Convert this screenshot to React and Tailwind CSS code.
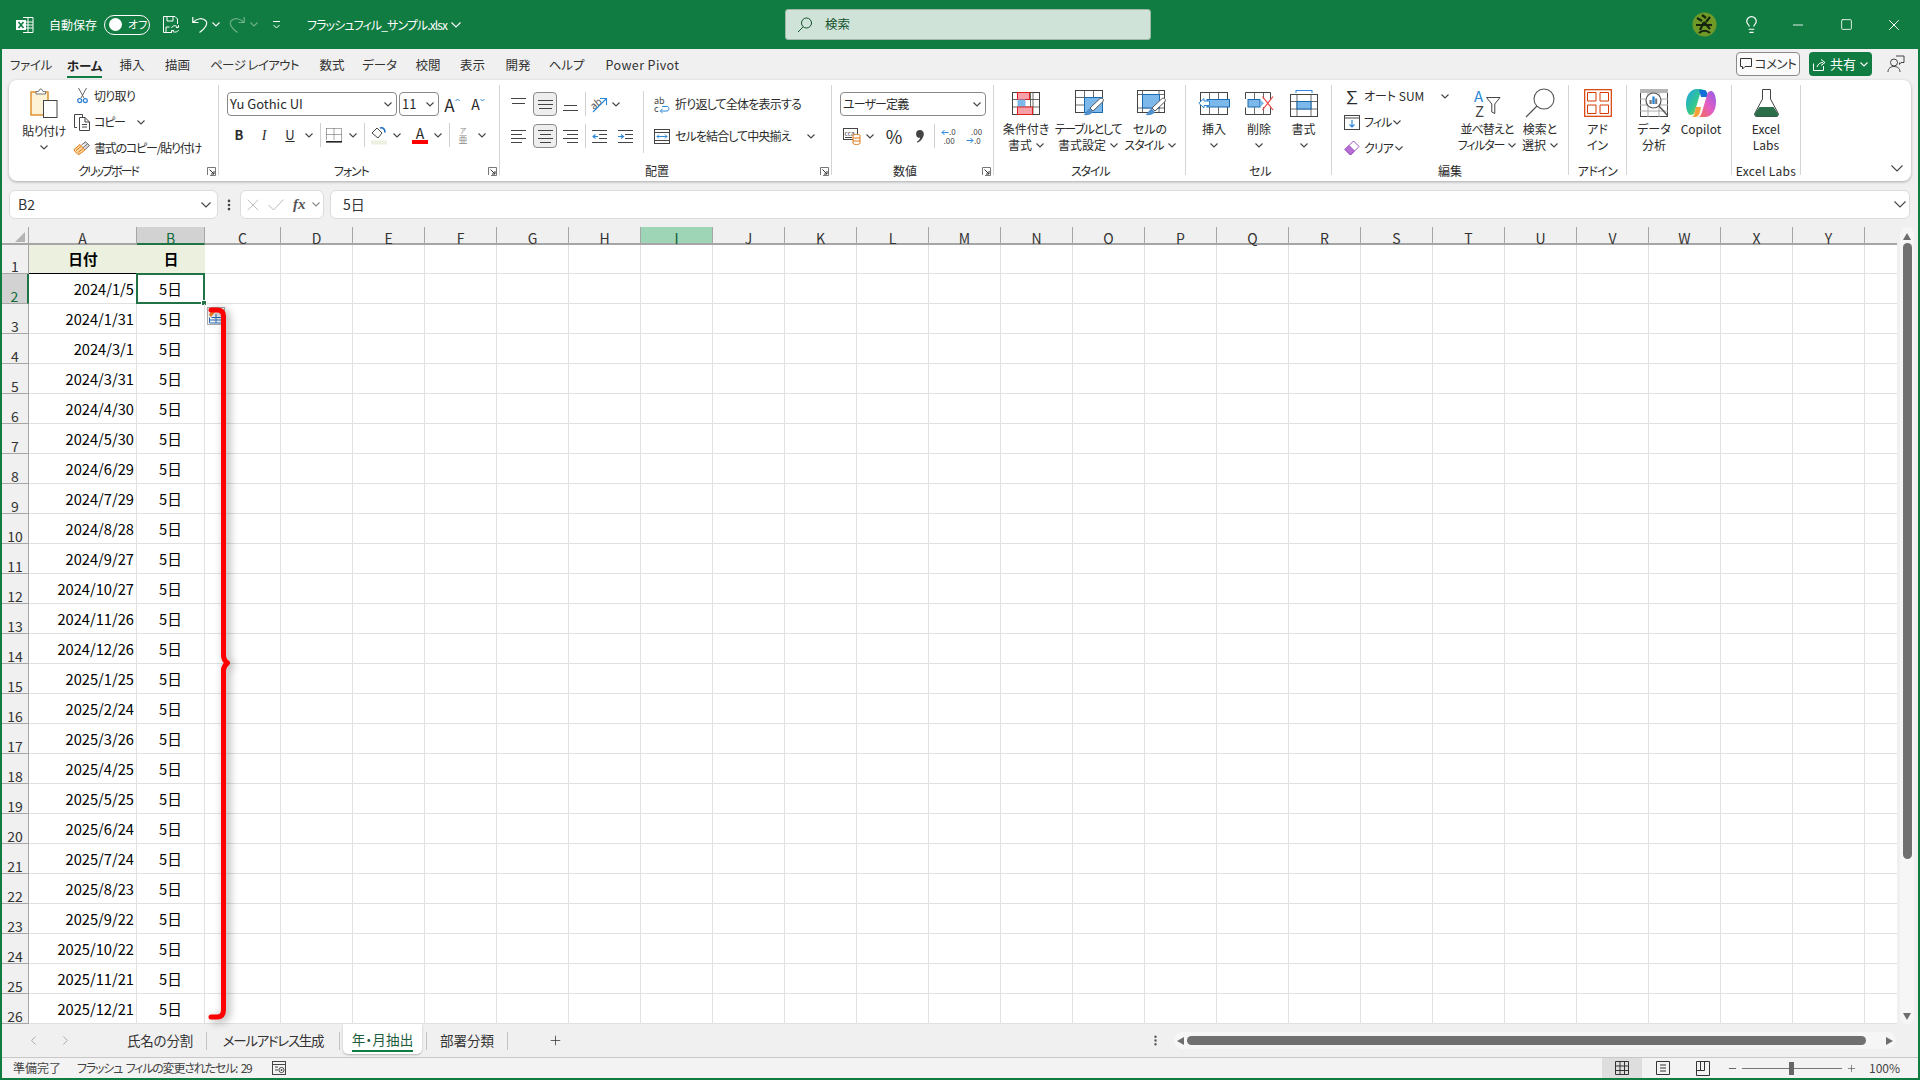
import { Minus, Square, X, Lightbulb, MoreVertical, Plus, ChevronLeft, ChevronRight } from 'lucide-react';

const dates = [
  '2024/1/5', '2024/1/31', '2024/3/1', '2024/3/31', '2024/4/30', '2024/5/30', '2024/6/29', '2024/7/29',
  '2024/8/28', '2024/9/27', '2024/10/27', '2024/11/26', '2024/12/26', '2025/1/25', '2025/2/24', '2025/3/26',
  '2025/4/25', '2025/5/25', '2025/6/24', '2025/7/24', '2025/8/23', '2025/9/22', '2025/10/22', '2025/11/21', '2025/12/21',
];

const plainCols = 'DEFGHIJKLMNOPQRSTUVWXY'.split('');

const menuTabs = [
  { label: 'ファイル', w: 'w-[58px]', cls: 'tracking-[-0.3px]' },
  { label: 'ホーム', w: 'w-[49px]', active: true },
  { label: '挿入', w: 'w-[46px]' },
  { label: '描画', w: 'w-[45px]' },
  { label: 'ページ レイアウト', w: 'w-[109px]', cls: 'tracking-[-0.6px]' },
  { label: '数式', w: 'w-[46px]' },
  { label: 'データ', w: 'w-[49px]' },
  { label: '校閲', w: 'w-[48px]' },
  { label: '表示', w: 'w-[41px]' },
  { label: '開発', w: 'w-[50px]' },
  { label: 'ヘルプ', w: 'w-[47px]' },
  { label: 'Power Pivot', w: 'w-[105px]', cls: 'tracking-[0.4px]' },
];

function Chev({ className = '', color = '#444' }) {
  return (
    <svg width="8" height="5" viewBox="0 0 8 5" className={className}>
      <path d="M0.5 0.5 4 4 7.5 0.5" fill="none" stroke={color} strokeWidth="1.1" />
    </svg>
  );
}

function Expander() {
  return (
    <svg width="9" height="9" viewBox="0 0 9 9">
      <path d="M0.5 8V0.5H8.5V8.5H3" fill="none" stroke="#777" />
      <path d="M2.5 2.5 7 7M7 4V7H4" fill="none" stroke="#333" />
    </svg>
  );
}

function Spot({ w, children, className = '' }) {
  return <span className={`flex shrink-0 items-center justify-center ${w} ${className}`}>{children}</span>;
}

function VSep({ className = '' }) {
  return <span className={`h-[24px] w-px shrink-0 bg-[#d0d0d0] ${className}`} />;
}

function Lines({ rows, align = 'left', width = 15 }) {
  return (
    <svg width={width} height="15" viewBox={`0 0 ${width} 15`}>
      {rows.map(([y, len]) => {
        const x = align === 'left' ? 0 : align === 'right' ? width - len : (width - len) / 2;
        return <rect key={y} x={x} y={y} width={len} height="1" fill="#444" />;
      })}
    </svg>
  );
}

function IndentIcon({ inc }) {
  return (
    <svg width="15" height="13" viewBox="0 0 15 13">
      <path d="M0 .5H15M7 4.5H15M7 8.5H15M0 12.5H15" stroke="#444" fill="none" />
      <path d={inc ? 'M0 6.5H5M3 4.5 5.5 6.5 3 8.5' : 'M1 6.5H6M3.5 4.5 1 6.5 3.5 8.5'} stroke="#2b88d8" strokeWidth="1.1" fill="none" />
    </svg>
  );
}

function PasteIcon() {
  return (
    <svg width="28" height="30" viewBox="0 0 28 30">
      <rect x="1" y="4" width="17" height="23" fill="#fdf1d6" stroke="#dd8a22" strokeWidth="1.4" />
      <path d="M6 6V3.5H8.5L10 1 11.5 1 13 3.5H15.5V6Z" fill="#fff" stroke="#777" />
      <rect x="13.5" y="12.5" width="13.5" height="17" fill="#fff" stroke="#444" />
    </svg>
  );
}

function ScissorsIcon() {
  return (
    <svg width="11" height="16" viewBox="0 0 11 16">
      <path d="M1.5 0 7 10M9.5 0 4 10" stroke="#666" fill="none" />
      <circle cx="2.7" cy="12.6" r="2" fill="none" stroke="#2b7cd3" strokeWidth="1.2" />
      <circle cx="8.3" cy="12.6" r="2" fill="none" stroke="#2b7cd3" strokeWidth="1.2" />
    </svg>
  );
}

function CopyIcon() {
  return (
    <svg width="16" height="17" viewBox="0 0 16 17">
      <path d="M3 13.5H.5V.5H8.5V3" fill="none" stroke="#444" />
      <path d="M5.5 3.5H11L15.5 8V16.5H5.5Z M11 3.5V8H15.5" fill="#fff" stroke="#444" />
      <path d="M8 10.5H13M8 13H13" stroke="#444" />
    </svg>
  );
}

function PainterIcon() {
  return (
    <svg width="18" height="14" viewBox="0 0 18 14">
      <path d="M1 8.5 7 3.5 12 9 6 13.5C4 13 2 11 1 8.5Z" fill="#fbd7a3" stroke="#e17a17" />
      <path d="M3 9.5 8 5.5M5 11.5 10 7.5" stroke="#e17a17" />
      <path d="M8.5 4 12.5 .8 14.5 2.8M12 8.5 16.5 4.5 14.5 2.8 10 6.5" fill="#ddd" stroke="#666" />
    </svg>
  );
}

function BorderIcon() {
  return (
    <svg width="16" height="15" viewBox="0 0 16 15">
      <path d="M.5 .5H15.5V12.5M.5 .5V12.5M8 .5V12.5M.5 6.5H15.5" fill="none" stroke="#555" strokeDasharray="1 1" />
      <rect x="0" y="13" width="16" height="1.6" fill="#222" />
    </svg>
  );
}

function FillIcon() {
  return (
    <svg width="16" height="19" viewBox="0 0 16 19">
      <path d="M1 7 6 2 11 7 7 12Z" fill="#fff" stroke="#444" />
      <path d="M9 2C12 1 14 3 14 6.5" fill="none" stroke="#1b6ec2" strokeWidth="1.6" />
      <rect x="0" y="14.5" width="16" height="4" fill="#ebf1de" />
    </svg>
  );
}

function OrientIcon() {
  return (
    <svg width="18" height="18" viewBox="0 0 18 18" className="overflow-visible">
      <text x="0" y="13" fontSize="10" fill="#555" transform="rotate(-40 5 9)">ab</text>
      <path d="M3 17 16 4M10 3.5H16.5V10" fill="none" stroke="#2b88d8" strokeWidth="1.1" />
    </svg>
  );
}

function WrapIcon() {
  return (
    <svg width="16" height="17" viewBox="0 0 16 17" className="overflow-visible">
      <text x="0" y="8" fontSize="9" fill="#444">ab</text>
      <text x="0" y="16" fontSize="9" fill="#444">c</text>
      <path d="M8 10.5H13C15.5 10.5 15.5 15 13 15H6.5M8.5 12.8 6.3 15 8.5 17" fill="none" stroke="#2b88d8" />
    </svg>
  );
}

function MergeIcon() {
  return (
    <svg width="16" height="15" viewBox="0 0 16 15">
      <rect x=".5" y=".5" width="15" height="14" fill="#fff" stroke="#444" />
      <path d="M.5 3.5H15.5M.5 11.5H15.5" stroke="#444" />
      <path d="M3 7.5H13M5 5.5 3 7.5 5 9.5M11 5.5 13 7.5 11 9.5" fill="none" stroke="#2b88d8" />
    </svg>
  );
}

function AccountingIcon() {
  return (
    <svg width="18" height="17" viewBox="0 0 18 17" className="overflow-visible">
      <rect x=".5" y=".5" width="14" height="11" fill="#fff" stroke="#444" />
      <text x="1.5" y="7.5" fontSize="6.5" fill="#444">cca</text>
      <path d="M2 9.5H9" stroke="#444" />
      <path d="M10 7.5C10 6 17 6 17 7.5V15C17 17 10 17 10 15Z" fill="#fff" stroke="#e07a17" />
      <path d="M10 10H17M10 13H17" stroke="#e07a17" />
    </svg>
  );
}

function CommaIcon() {
  return (
    <svg width="8" height="13" viewBox="0 0 8 13">
      <path d="M4 0A3.8 3.8 0 0 1 7.8 4C7.8 7.5 5 11 1.5 12.8L.9 11.8C3 10.6 4 9.2 4 7.8A3.9 3.9 0 0 1 4 0Z" fill="#444" />
    </svg>
  );
}

function DecimalIcon({ inc }) {
  return (
    <svg width="16" height="17" viewBox="0 0 16 17" className="overflow-visible">
      <text x={inc ? 8 : 5} y="7" fontSize="8" fill="#444">{inc ? '.0' : '.00'}</text>
      <text x={inc ? 2.5 : 8} y="15.5" fontSize="8" fill="#444">{inc ? '.00' : '.0'}</text>
      {inc
        ? <path d="M7.5 4.5H1M3.5 2 1 4.5 3.5 7" fill="none" stroke="#2b88d8" />
        : <path d="M.5 12.5H7M4.5 10 7 12.5 4.5 15" fill="none" stroke="#2b88d8" />}
    </svg>
  );
}

function TableGrid({ children, w = 28, h = 23, className = '' }) {
  return (
    <svg width={w} height={h} viewBox={`0 0 ${w} ${h}`} className={className}>
      {children}
    </svg>
  );
}

function CondIcon() {
  return (
    <TableGrid>
      <rect x=".5" y=".5" width="27" height="22" fill="#fff" stroke="#444" />
      <path d="M9.5 0V23M18.5 0V23M21 0V23M0 7.5H28M0 15H28" stroke="#444" strokeWidth=".8" />
      <rect x="5.5" y=".5" width="12" height="7" fill="#f8a0a8" stroke="#e02020" />
      <rect x="5.5" y="7.5" width="8" height="7.5" fill="#7db8ea" />
      <rect x="5.5" y="15" width="15" height="7.5" fill="#f8a0a8" stroke="#e02020" />
    </TableGrid>
  );
}

function BrushOver() {
  return (
    <g>
      <path d="M27.5 8.5C29 9.5 28.5 11 27.5 12L18 21 15 18 24.5 9C25.5 8 26.5 8 27.5 8.5Z" fill="#fff" stroke="#555" />
      <path d="M17.8 22C16 25 12 25.5 8.5 25 11 23.5 11.5 20 14.7 18.5Z" fill="#4f90cc" />
    </g>
  );
}

function TableFmtIcon() {
  return (
    <TableGrid w={30} h={26} className="ml-[3px]">
      <rect x=".5" y=".5" width="27" height="22" fill="#fff" stroke="#444" />
      <path d="M9.5 0V23M18.5 0V23M0 7.5H28M0 15H28" stroke="#444" strokeWidth=".8" />
      <path d="M9.5 7.5H27.5V22.5H9.5Z" fill="#7db8ea" stroke="#1a6bb0" />
      <BrushOver />
    </TableGrid>
  );
}

function CellStyleIcon() {
  return (
    <TableGrid w={30} h={26} className="ml-[3px]">
      <rect x=".5" y=".5" width="27" height="22" fill="#fff" stroke="#444" />
      <path d="M5.5 0V23M22 0V23M0 4.5H28M0 18H28" stroke="#444" strokeWidth=".8" />
      <rect x="5.5" y="4.5" width="17" height="13.5" fill="#7db8ea" stroke="#1a6bb0" />
      <BrushOver />
    </TableGrid>
  );
}

function InsertIcon() {
  return (
    <svg width="32" height="23" viewBox="0 0 32 23">
      <rect x="2.5" y=".5" width="27" height="22" fill="#fff" stroke="#444" />
      <path d="M11.5 0V23M20.5 0V23" stroke="#444" strokeWidth=".8" />
      <rect x="9" y="7.5" width="22.5" height="7.5" fill="#7db8ea" stroke="#1a6bb0" />
      <path d="M.8 11.2 6 6.5V9H11.5V13.5H6V16Z" fill="#fff" stroke="#2b88d8" />
    </svg>
  );
}

function DeleteIcon() {
  return (
    <svg width="32" height="23" viewBox="0 0 32 23">
      <path d="M2.5 7V.5H27.5V7M2.5 15.5V22.5H27.5V15.5" fill="#fff" stroke="#444" />
      <path d="M11.5 0V7M20.5 0V7M11.5 15V23M20.5 15V23" stroke="#444" strokeWidth=".8" />
      <rect x="5" y="7.5" width="12" height="7.5" fill="#7db8ea" stroke="#1a6bb0" />
      <path d="M17 7.5 21 11.2 17 15Z" fill="#7db8ea" />
      <path d="M19.5 4.5 30 18M30 4.5 19.5 18" stroke="#ee4444" strokeWidth="1.2" />
    </svg>
  );
}

function FormatIcon() {
  return (
    <svg width="28" height="27" viewBox="0 0 28 27">
      <path d="M6 .5H22M6 0V3M22 0V3" stroke="#2b88d8" fill="none" />
      <rect x=".5" y="4.5" width="27" height="22" fill="#fff" stroke="#444" />
      <path d="M7 4V27M21 4V27M0 11.5H28M0 19H28" stroke="#444" strokeWidth=".8" />
      <rect x="7" y="11.5" width="14" height="7.5" fill="#7db8ea" stroke="#1a6bb0" />
    </svg>
  );
}

function AutofillIcon() {
  return (
    <svg width="16" height="15" viewBox="0 0 16 15">
      <rect x=".5" y=".5" width="15" height="14" fill="#fff" stroke="#444" />
      <path d="M.5 3H15.5" stroke="#444" />
      <path d="M8 5V12M5.5 9.5 8 12 10.5 9.5" fill="none" stroke="#2b88d8" strokeWidth="1.2" />
    </svg>
  );
}

function EraserIcon() {
  return (
    <svg width="16" height="16" viewBox="0 0 16 16">
      <path d="M1 9.5 9.5 1 15 6.5 6.5 15Z" fill="#fff" stroke="#9b4fc0" />
      <path d="M1 9.5 5 5.5 10.5 11 6.5 15Z" fill="#b76fd6" stroke="#9b4fc0" />
    </svg>
  );
}

function SortIcon() {
  return (
    <svg width="27" height="27" viewBox="0 0 27 27" className="overflow-visible">
      <text x="0" y="12" fontSize="15" fill="#2b88d8">A</text>
      <text x="1" y="27" fontSize="15" fill="#444">Z</text>
      <path d="M12.5 7.5H26L20.8 14V23.5L17.8 22V14Z" fill="#fff" stroke="#444" />
    </svg>
  );
}

function FindIcon() {
  return (
    <svg width="30" height="30" viewBox="0 0 30 30">
      <circle cx="19" cy="11" r="10" fill="#fff" stroke="#555" strokeWidth="1.1" />
      <path d="M12 18 1 29" stroke="#555" strokeWidth="1.2" />
    </svg>
  );
}

function AddinIcon() {
  return (
    <svg width="28" height="28" viewBox="0 0 28 28">
      <rect x=".7" y=".7" width="26.6" height="26.6" fill="none" stroke="#d83b01" strokeWidth="1.2" />
      <path d="M3.5 3.5H12V12H3.5ZM16 3.5H24.5V12H16ZM3.5 16H12V24.5H3.5ZM16 16H24.5V24.5H16Z" fill="none" stroke="#d83b01" />
    </svg>
  );
}

function AnalysisIcon() {
  return (
    <svg width="28" height="28" viewBox="0 0 28 28">
      <rect x=".5" y=".5" width="27" height="27" fill="#fff" stroke="#444" />
      <rect x="0" y="0" width="28" height="4" fill="#b5b5b5" />
      <path d="M8 4V28M19 4V28M0 10H28M0 16H28M0 22H28" stroke="#aaa" />
      <circle cx="13.5" cy="11.5" r="7.5" fill="#fff" stroke="#555" strokeWidth="1.2" />
      <path d="M19 17 28 27" stroke="#555" strokeWidth="1.5" />
      <rect x="9.5" y="11" width="2.2" height="4" fill="#777" />
      <rect x="12.3" y="7.5" width="2.4" height="7.5" fill="#2b88d8" />
      <rect x="15.2" y="9.5" width="2" height="5.5" fill="#777" />
    </svg>
  );
}

function CopilotIcon() {
  return (
    <svg width="30" height="28" viewBox="0 0 30 28">
      <defs>
        <linearGradient id="cp1" x1="0" y1="0" x2="1" y2="1">
          <stop offset="0" stopColor="#1fa2e8" />
          <stop offset=".55" stopColor="#35c98a" />
          <stop offset="1" stopColor="#f2c531" />
        </linearGradient>
        <linearGradient id="cp2" x1="0" y1="1" x2="1" y2="0">
          <stop offset="0" stopColor="#f5714f" />
          <stop offset=".5" stopColor="#e35cc4" />
          <stop offset="1" stopColor="#8e5de8" />
        </linearGradient>
      </defs>
      <path d="M11 0H18C16 0 15 2 14 5L9 22C8.5 25 7 26 5 26 2 26 0 21 0 15 0 7 4 0 11 0Z" fill="url(#cp1)" />
      <path d="M13 1H18.5C20 1 21 3 21.5 5.5L22.5 8H15Z" fill="#1470d8" />
      <path d="M19 28H12C14 28 15 26 16 23L21 6C21.5 3 23 2 25 2 28 2 30 7 30 13 30 21 26 28 19 28Z" fill="url(#cp2)" />
      <path d="M10 18H15L14 23C13.5 25.5 12 28 9 28H5C8 28 8.5 25 9 22Z" fill="#f8a13a" />
    </svg>
  );
}

function FlaskIcon() {
  return (
    <svg width="25" height="28" viewBox="0 0 25 28">
      <path d="M8.5 .5H16.5V10L24 24C25 26 24 27.5 22 27.5H3C1 27.5 0 26 1 24L8.5 10Z" fill="#fff" stroke="#444" />
      <path d="M5.5 18H19.5L24 24.5C25 26 24 27.5 22 27.5H3C1 27.5 0 26 1 24Z" fill="#2c6e49" />
    </svg>
  );
}

function SmallRow({ icon, label, chev, chevClass = 'ml-[2px]', labelClass = '' }) {
  return (
    <div className="flex h-[22px] items-center">
      <span className="flex w-[20px] shrink-0 items-center justify-center">{icon}</span>
      <span className={`ml-[2px] whitespace-nowrap ${labelClass}`}>{label}</span>
      {chev && <Chev className={chevClass} />}
    </div>
  );
}

function BigBtn({ w, icon, lines, chev }) {
  return (
    <div className={`flex ${w} shrink-0 flex-col items-center`}>
      <div className="flex h-[36px] items-center justify-center">{icon}</div>
      {lines.map((line, i) => (
        <div key={i} className="flex h-[16px] items-center whitespace-nowrap leading-[16px]">
          {line}
          {chev && i === lines.length - 1 && <Chev className="ml-[4px]" />}
        </div>
      ))}
    </div>
  );
}

function CellBtn({ w, icon, label }) {
  return (
    <div className={`flex ${w} shrink-0 flex-col items-center`}>
      <div className="flex h-[36px] items-center justify-center">{icon}</div>
      <div className="flex h-[16px] items-center leading-[16px]">{label}</div>
      <div className="flex h-[16px] items-center"><Chev /></div>
    </div>
  );
}

function Group({ w, label, labelClass = '', expander, children }) {
  return (
    <div className={`flex h-[90px] ${w} shrink-0 flex-col border-r border-[#d4d4d4]`}>
      <div className="flex h-[79px] shrink-0">{children}</div>
      <div className={`flex h-[14px] shrink-0 items-center leading-[14px] ${labelClass}`}>
        <span className="whitespace-nowrap">{label}</span>
        {expander && <span className="ml-auto mr-[2px] flex"><Expander /></span>}
      </div>
    </div>
  );
}

function SelectBox({ w, text, textClass = 'text-[13px]' }) {
  return (
    <div className={`flex h-[24px] ${w} shrink-0 items-center rounded-[4px] border border-[#8a8a8a] bg-white pl-[2px] pr-[4px]`}>
      <span className={`whitespace-nowrap ${textClass}`}>{text}</span>
      <Chev className="ml-auto" />
    </div>
  );
}

function Ribbon() {
  return (
    <div className="ml-[7px] flex h-[101px] w-[1902px] shrink-0 rounded-[8px] bg-white pt-[5px] text-[12px] text-[#2b2b2b] shadow-[0_1px_3px_rgba(0,0,0,0.3)]">
      <Group w="w-[210px]" label="クリップボード" labelClass="pl-[69px] tracking-[-2px]" expander>
        <div className="flex w-[63px] shrink-0 flex-col items-center pl-[7px]">
          <div className="flex h-[33px] items-end"><PasteIcon /></div>
          <div className="mt-[5px] h-[16px] whitespace-nowrap leading-[16px] tracking-[-0.5px]">貼り付け</div>
          <div className="flex h-[16px] items-center"><Chev /></div>
        </div>
        <div className="flex flex-col gap-[4px]">
          <SmallRow icon={<ScissorsIcon />} label="切り取り" labelClass="tracking-[-0.7px]" />
          <SmallRow icon={<CopyIcon />} label="コピー" labelClass="tracking-[-1.2px]" chev chevClass="ml-[12px]" />
          <SmallRow icon={<PainterIcon />} label="書式のコピー/貼り付け" labelClass="tracking-[-1.2px]" />
        </div>
      </Group>

      <Group w="w-[281px]" label="フォント" labelClass="pl-[115px] tracking-[-1.2px]" expander>
        <div className="flex flex-col gap-[7px] pl-[8px] pt-[7px]">
          <div className="flex h-[24px] items-center">
            <SelectBox w="w-[170px]" text="Yu Gothic UI" />
            <SelectBox w="w-[40px] ml-[2px]" text="11" />
            <Spot w="w-[24px] ml-[1px]">
              <span className="text-[17px] leading-none">A</span>
              <svg width="5" height="4" viewBox="0 0 5 4" className="-mt-[9px]"><path d="M.5 3 2.5 1 4.5 3" fill="none" stroke="#2b88d8" /></svg>
            </Spot>
            <Spot w="w-[28px]">
              <span className="text-[14px] leading-none">A</span>
              <svg width="5" height="4" viewBox="0 0 5 4" className="-mt-[9px]"><path d="M.5 1 2.5 3 4.5 1" fill="none" stroke="#2b88d8" /></svg>
            </Spot>
          </div>
          <div className="flex h-[24px] items-center">
            <Spot w="w-[24px]"><span className="text-[13px] font-bold">B</span></Spot>
            <Spot w="w-[26px]"><span className="font-['Liberation_Serif',serif] text-[14px] italic">I</span></Spot>
            <Spot w="w-[26px]"><span className="text-[13px] underline">U</span></Spot>
            <Spot w="w-[12px]"><Chev /></Spot>
            <VSep className="ml-[5px]" />
            <Spot w="w-[26px]"><BorderIcon /></Spot>
            <Spot w="w-[12px]"><Chev /></Spot>
            <VSep className="ml-[5px]" />
            <Spot w="w-[28px]"><FillIcon /></Spot>
            <Spot w="w-[8px]"><Chev /></Spot>
            <Spot w="w-[26px] ml-[6px]">
              <span className="flex flex-col items-center">
                <span className="text-[14px] leading-[14px]">A</span>
                <span className="h-[4px] w-[16px] bg-[#ff0000]" />
              </span>
            </Spot>
            <Spot w="w-[10px]"><Chev /></Spot>
            <VSep className="ml-[6px]" />
            <Spot w="w-[26px]">
              <span className="flex flex-col items-center gap-[1px] text-[#888]">
                <span className="text-[7px] leading-[8px]">ア</span>
                <span className="text-[9px] leading-[10px]">亜</span>
              </span>
            </Spot>
            <Spot w="w-[12px]"><Chev /></Spot>
          </div>
        </div>
      </Group>

      <Group w="w-[332px]" label="配置" labelClass="pl-[145px]" expander>
        <div className="mt-[6px] flex h-[62px] w-[144px] shrink-0 flex-col gap-[8px] border-r border-[#d4d4d4] pl-[6px] pt-[7px]">
          <div className="-mt-[6px] flex h-[24px] items-center">
            <Spot w="w-[24px]"><Lines rows={[[1, 15], [6, 13]]} align="center" /></Spot>
            <Spot w="w-[24px] ml-[3px] h-[24px] rounded-[4px] border border-[#8a8a8a] bg-[#eeeeee]"><Lines rows={[[3, 15], [7, 15], [11, 13]]} align="center" /></Spot>
            <Spot w="w-[24px] ml-px"><Lines rows={[[8, 13], [13, 15]]} align="center" /></Spot>
            <VSep className="ml-[3px]" />
            <Spot w="w-[26px]"><OrientIcon /></Spot>
            <Spot w="w-[8px]"><Chev /></Spot>
          </div>
          <div className="flex h-[24px] items-center">
            <Spot w="w-[24px]"><Lines rows={[[1, 15], [5, 11], [9, 15], [13, 11]]} /></Spot>
            <Spot w="w-[24px] ml-[3px] h-[24px] rounded-[4px] border border-[#8a8a8a] bg-[#eeeeee]"><Lines rows={[[1, 15], [5, 11], [9, 15], [13, 11]]} align="center" /></Spot>
            <Spot w="w-[24px] ml-px"><Lines rows={[[1, 15], [5, 11], [9, 15], [13, 11]]} align="right" /></Spot>
            <VSep className="ml-[3px]" />
            <Spot w="w-[26px]"><IndentIcon /></Spot>
            <Spot w="w-[26px]"><IndentIcon inc /></Spot>
          </div>
        </div>
        <div className="flex flex-col gap-[8px] pt-[7px]">
          <div className="flex h-[24px] items-center">
            <Spot w="w-[31px] pl-[5px]"><WrapIcon /></Spot>
            <span className="whitespace-nowrap tracking-[-0.8px]">折り返して全体を表示する</span>
          </div>
          <div className="flex h-[24px] items-center">
            <Spot w="w-[31px] pl-[5px]"><MergeIcon /></Spot>
            <span className="whitespace-nowrap tracking-[-0.9px]">セルを結合して中央揃え</span>
            <Chev className="ml-[16px]" />
          </div>
        </div>
      </Group>

      <Group w="w-[162px]" label="数値" labelClass="pl-[61px]" expander>
        <div className="flex flex-col gap-[8px] pl-[8px] pt-[7px]">
          <SelectBox w="w-[146px]" text="ユーザー定義" textClass="text-[12px] tracking-[-0.9px]" />
          <div className="flex h-[24px] items-center">
            <Spot w="w-[24px]"><AccountingIcon /></Spot>
            <Spot w="w-[12px]"><Chev /></Spot>
            <Spot w="w-[30px] ml-[3px]"><span className="text-[18px] leading-none">%</span></Spot>
            <Spot w="w-[22px]"><CommaIcon /></Spot>
            <VSep className="ml-[3px]" />
            <Spot w="w-[28px]"><DecimalIcon inc /></Spot>
            <Spot w="w-[22px]"><DecimalIcon /></Spot>
          </div>
        </div>
      </Group>

      <Group w="w-[192px]" label="スタイル" labelClass="pl-[77px] tracking-[-1.2px]">
        <BigBtn w="w-[64px]" icon={<CondIcon />} lines={['条件付き', '書式']} chev />
        <BigBtn w="w-[60px]" icon={<TableFmtIcon />} lines={[<span className="tracking-[-1.2px]">テーブルとして</span>, '書式設定']} chev />
        <BigBtn w="w-[64px]" icon={<CellStyleIcon />} lines={['セルの', <span className="tracking-[-1px]">スタイル</span>]} chev />
      </Group>

      <Group w="w-[146px]" label="セル" labelClass="pl-[63px]">
        <CellBtn w="w-[56px]" icon={<InsertIcon />} label="挿入" />
        <CellBtn w="w-[34px]" icon={<DeleteIcon />} label="削除" />
        <CellBtn w="w-[55px]" icon={<FormatIcon />} label="書式" />
      </Group>

      <Group w="w-[237px]" label="編集" labelClass="pl-[106px]">
        <div className="flex w-[128px] shrink-0 flex-col gap-[4px] pl-[10px]">
          <SmallRow icon={<span className="text-[17px] leading-none">∑</span>} label="オート SUM" chev chevClass="ml-[17px]" />
          <SmallRow icon={<AutofillIcon />} label="フィル" labelClass="tracking-[-1px]" chev />
          <SmallRow icon={<EraserIcon />} label="クリア" labelClass="tracking-[-1px]" chev />
        </div>
        <BigBtn w="w-[54px]" icon={<SortIcon />} lines={[<span className="tracking-[-0.9px]">並べ替えと</span>, <span className="tracking-[-1.2px]">フィルター</span>]} chev />
        <BigBtn w="w-[52px]" icon={<FindIcon />} lines={['検索と', '選択']} chev />
      </Group>

      <Group w="w-[58px]" label="アドイン" labelClass="justify-center tracking-[-0.6px]">
        <BigBtn w="w-[57px]" icon={<AddinIcon />} lines={['アド', 'イン']} />
      </Group>

      <Group w="w-[105px]" label="">
        <BigBtn w="w-[54px]" icon={<AnalysisIcon />} lines={['データ', '分析']} />
        <BigBtn w="w-[40px]" icon={<CopilotIcon />} lines={['Copilot']} />
      </Group>

      <Group w="w-[69px]" label="Excel Labs" labelClass="justify-center tracking-[0.3px]">
        <BigBtn w="w-[68px]" icon={<FlaskIcon />} lines={['Excel', 'Labs']} />
      </Group>

      <div className="flex h-[90px] flex-1 items-end justify-end pb-[3px] pr-[8px]">
        <svg width="12" height="7" viewBox="0 0 12 7"><path d="M.5 .5 6 6 11.5 .5" fill="none" stroke="#444" strokeWidth="1.1" /></svg>
      </div>
    </div>
  );
}

function FormulaBar() {
  return (
    <div className="mt-[9px] flex h-[29px] shrink-0 items-stretch text-[14px] text-[#333]">
      <div className="ml-[7px] flex w-[209px] items-center rounded-[6px] border border-[#dcdcdc] bg-white pl-[8px] pr-[6px]">
        <span>B2</span>
        <svg width="10" height="6" viewBox="0 0 10 6" className="ml-auto"><path d="M.5 .5 5 5 9.5 .5" fill="none" stroke="#444" strokeWidth="1.1" /></svg>
      </div>
      <div className="flex w-[22px] items-center justify-center">
        <MoreVertical size={14} strokeWidth={2.5} className="text-[#444]" />
      </div>
      <div className="flex w-[84px] items-center rounded-[6px] border border-[#dcdcdc] bg-white pl-[2px]">
        <X size={20} strokeWidth={0.9} className="text-[#aaa]" />
        <svg width="16" height="12" viewBox="0 0 16 12" className="ml-[5px]"><path d="M.5 6 5.5 11 15.5 .5" fill="none" stroke="#bbb" /></svg>
        <span className="ml-[9px] font-['Liberation_Serif',serif] text-[15px] font-bold italic leading-none text-[#555]">fx</span>
        <Chev className="ml-[6px]" color="#888" />
      </div>
      <div className="ml-[6px] flex w-[1580px] items-center rounded-[6px] border border-[#dcdcdc] bg-white pl-[12px] pr-[3px]">
        <span>5日</span>
        <svg width="12" height="7" viewBox="0 0 12 7" className="ml-auto"><path d="M.5 .5 6 6 11.5 .5" fill="none" stroke="#444" strokeWidth="1.1" /></svg>
      </div>
    </div>
  );
}

function GridHeader() {
  return (
    <div className="flex h-[18px] shrink-0 bg-[#f0f0f0] text-[14px] leading-none text-[#333]">
      <div className="flex w-[27px] items-end justify-end border-b-2 border-r border-[#a6a6a6] pb-[1px] pr-[3px]">
        <span className="h-0 w-0 border-b-[10px] border-l-[10px] border-b-[#b4b4b4] border-l-transparent" />
      </div>
      <div className="flex w-[108px] items-center justify-center border-b-2 border-r border-[#a6a6a6] pt-[5px]">A</div>
      <div className="flex w-[68px] items-center justify-center border-b-2 border-r border-b-[#217346] border-r-[#a6a6a6] bg-[#d2d2d2] pt-[5px] text-[#0f6b3a]">B</div>
      <div className="flex w-[76px] items-center justify-center border-b-2 border-r border-[#a6a6a6] pt-[5px]">C</div>
      {plainCols.map((c) => (
        <div
          key={c}
          className={`flex w-[72px] items-center justify-center border-b-2 border-r border-[#a6a6a6] pt-[5px] ${c === 'I' ? 'bg-[#9fd5b7] text-[#0f5c30]' : ''}`}
        >
          {c}
        </div>
      ))}
      <div className="w-[32px] border-b-2 border-[#a6a6a6]" />
    </div>
  );
}

function RowHead({ n }) {
  const selected = n === 2;
  return (
    <div
      className={`flex w-[27px] shrink-0 items-end justify-center border-b border-[#a6a6a6] leading-[14px] text-[14px] ${
        selected ? 'border-r-2 border-r-[#217346] bg-[#d2d2d2] text-[#0f6b3a]' : 'border-r bg-[#f0f0f0] text-[#333]'
      }`}
    >
      {n}
    </div>
  );
}

function EmptyCells() {
  return (
    <>
      <div className="w-[76px] shrink-0 border-b border-r border-[#e1e1e1]" />
      {plainCols.map((c) => (
        <div key={c} className="w-[72px] shrink-0 border-b border-r border-[#e1e1e1]" />
      ))}
      <div className="w-[32px] shrink-0 border-b border-[#e1e1e1]" />
    </>
  );
}

function Grid() {
  return (
    <div className="relative flex-1">
      <div className="flex h-[29px]">
        <RowHead n={1} />
        <div className="flex w-[108px] items-center justify-center border-b border-black bg-[#ebf1de] text-[14.67px] font-bold text-black">日付</div>
        <div className="flex w-[68px] items-center justify-center border-b border-[#ebf1de] bg-[#ebf1de] text-[14.67px] font-bold text-black">日</div>
        <EmptyCells />
      </div>
      {dates.map((d, i) => (
        <div key={d} className="flex h-[30px]">
          <RowHead n={i + 2} />
          <div className="flex w-[108px] items-center justify-end border-b border-r border-[#e1e1e1] pr-[2px] text-[14.67px] text-black">{d}</div>
          <div className="relative flex w-[68px] items-center justify-center border-b border-r border-[#e1e1e1] text-[14.67px] text-black">
            5日
            {i === 0 && (
              <span className="absolute -left-px -top-px -bottom-px -right-px border-2 border-[#217346]">
                <span className="absolute -bottom-[4px] -right-[4px] h-[6px] w-[6px] border border-white bg-[#217346]" />
              </span>
            )}
          </div>
          <EmptyCells />
        </div>
      ))}

      <span className="absolute left-[205px] top-[62px] flex h-[18px] w-[18px] items-center justify-center border border-[#ababab] bg-[#f5f5f5]">
        <svg width="16" height="16" viewBox="0 0 16 16">
          <path d="M1 7 4 1H7L5 4H7L3 9Z" fill="#ef7d22" />
          <path d="M3.5 9.5H14.5V15H1.5V9.5M8 6V15M1.5 12H14.5" fill="none" stroke="#2a6fb8" />
        </svg>
      </span>

      <svg width="30" height="722" viewBox="0 0 30 722" className="absolute left-[201.5px] top-[59px] drop-shadow-[3px_2px_4px_rgba(0,0,0,0.4)]">
        <path
          d="M7 6H13C17 6 19.5 8 19.5 12V352C19.5 355 21 357 23.5 359 21 361 19.5 363 19.5 366V706C19.5 711 17 713 13 713H7"
          fill="none"
          stroke="#ff0000"
          strokeWidth="5"
          strokeLinecap="round"
          strokeLinejoin="round"
        />
      </svg>
    </div>
  );
}

function VScroll() {
  return (
    <div className="flex w-[21px] shrink-0 flex-col items-start pl-[3px]">
      <div className="flex h-[797px] w-[14px] flex-col items-center rounded-full bg-[#f6f6f6] pt-[6px]">
        <span className="h-0 w-0 border-x-[4.5px] border-b-[7px] border-x-transparent border-b-[#6e6e6e]" />
        <div className="mt-[3px] h-[616px] w-[9px] rounded-full bg-[#707070]" />
        <span className="mb-[4px] mt-auto h-0 w-0 border-x-[4.5px] border-t-[7px] border-x-transparent border-t-[#6e6e6e]" />
      </div>
    </div>
  );
}

function SheetTabs() {
  return (
    <div className="flex h-[33px] shrink-0 items-start text-[13.5px] text-[#333]">
      <div className="flex h-[33px] w-[112px] items-center pl-[24px] text-[#999]">
        <ChevronLeft size={15} strokeWidth={1.3} />
        <ChevronRight size={15} strokeWidth={1.3} className="ml-[17px]" />
      </div>
      <div className="flex h-[33px] w-[92px] items-center justify-center tracking-[-0.2px]">氏名の分割</div>
      <span className="mt-[8px] h-[18px] w-px bg-[#c4c4c4]" />
      <div className="flex h-[33px] w-[132px] items-center justify-center tracking-[-1.3px]">メールアドレス生成</div>
      <span className="mt-[8px] h-[18px] w-px bg-[#c4c4c4]" />
      <div className="ml-[3px] flex h-[30px] w-[79px] flex-col items-center justify-center rounded-b-[5px] bg-white pt-[2px] tracking-[0.2px] text-[#1d5c3a] shadow-[0_1px_2px_rgba(0,0,0,0.25)]">
        <span className="border-b-2 border-[#107c41] leading-[22px]">年・月抽出</span>
      </div>
      <span className="ml-[4px] mt-[8px] h-[18px] w-px bg-[#c4c4c4]" />
      <div className="flex h-[33px] w-[80px] items-center justify-center">部署分類</div>
      <span className="mt-[8px] h-[18px] w-px bg-[#c4c4c4]" />
      <div className="ml-[40px] flex h-[33px] items-center"><Plus size={15} strokeWidth={1.2} /></div>
      <div className="ml-[586px] flex h-[33px] items-center"><MoreVertical size={13} strokeWidth={2.4} className="text-[#555]" /></div>
      <div className="ml-[12px] mt-[8px] flex h-[17px] w-[722px] items-center rounded-full bg-[#f6f6f6] pl-[3px]">
        <span className="h-0 w-0 border-y-[4.5px] border-r-[7px] border-y-transparent border-r-[#6e6e6e]" />
        <div className="ml-[3px] h-[9px] w-[679px] rounded-full bg-[#707070]" />
        <span className="ml-[20px] h-0 w-0 border-y-[4.5px] border-l-[7px] border-y-transparent border-l-[#6e6e6e]" />
      </div>
    </div>
  );
}

function StatusBar() {
  return (
    <div className="flex h-[21px] shrink-0 items-center border-t border-[#c8c8c8] bg-[#f3f3f3] pl-[11px] text-[12px] text-[#444]">
      <span className="whitespace-nowrap">準備完了</span>
      <span className="ml-[16px] whitespace-nowrap tracking-[-1.2px] [word-spacing:2px]">フラッシュ フィルの変更されたセル: 29</span>
      <svg width="14" height="14" viewBox="0 0 14 14" className="ml-[20px]">
        <rect x=".5" y=".5" width="13" height="13" fill="none" stroke="#444" />
        <path d="M1 3.5H13M3 6H6M3 9H6" stroke="#444" />
        <circle cx="9.5" cy="9" r="2.6" fill="#fff" stroke="#444" />
        <circle cx="9.5" cy="9" r="1" fill="#444" />
      </svg>
      <div className="ml-auto flex h-full w-[316px] shrink-0 items-center">
        <div className="flex h-full w-[40px] items-center justify-center bg-[#dedede]">
          <svg width="14" height="14" viewBox="0 0 14 14"><path d="M.5 .5H13.5V13.5H.5ZM.5 5H13.5M.5 9.5H13.5M5 .5V13.5M9.5 .5V13.5" fill="none" stroke="#333" /></svg>
        </div>
        <div className="flex w-[41px] items-center justify-center">
          <svg width="14" height="14" viewBox="0 0 14 14"><path d="M.5 .5H13.5V13.5H.5ZM4 4H10M4 7H10M4 10H10" fill="none" stroke="#333" /></svg>
        </div>
        <div className="flex w-[40px] items-center justify-center">
          <svg width="14" height="15" viewBox="0 0 14 15"><path d="M.5 .5H13.5V14.5H.5ZM.5 9.5H8.5V.5M4.5 .5V9.5" fill="none" stroke="#333" /></svg>
        </div>
        <Minus size={11} strokeWidth={1.6} className="ml-[4px] text-[#333]" />
        <div className="relative ml-[4px] h-px w-[100px] bg-[#777]">
          <span className="absolute -top-[6px] left-[47px] h-[13px] w-[5px] bg-[#666]" />
        </div>
        <Plus size={11} strokeWidth={1.2} className="ml-[4px] text-[#333]" />
        <span className="ml-[12px]">100%</span>
      </div>
    </div>
  );
}

function TitleBar() {
  return (
    <div className="flex h-[49px] shrink-0 items-center bg-[#107c41] text-white">
      <div className="flex w-[785px] shrink-0 items-center">
        <svg width="18" height="18" viewBox="0 0 18 18" className="ml-[16px]">
          <path d="M7 1.5H17V16.5H7M7 6H17M7 9H17M7 12H17M12 1.5V16.5" fill="none" stroke="#fff" />
          <rect x="0" y="4" width="10" height="10" fill="#fff" />
          <path d="M2.5 6 7.5 12M7.5 6 2.5 12" stroke="#107c41" strokeWidth="1.6" />
        </svg>
        <span className="ml-[15px] whitespace-nowrap text-[12px]">自動保存</span>
        <div className="ml-[7px] flex h-[20px] w-[46px] items-center rounded-full border border-white pl-[4px]">
          <span className="h-[13px] w-[13px] rounded-full bg-white" />
          <span className="ml-[6px] text-[11px]">オフ</span>
        </div>
        <svg width="17" height="17" viewBox="0 0 17 17" className="ml-[13px]">
          <path d="M8 16.5H.5V.5H12L14.5 3V8" fill="none" stroke="#fff" />
          <path d="M4 .5V5H10V.5M3 16.5V11H6.5" fill="none" stroke="#fff" />
          <path d="M8.5 12C9 9.5 13 9 14.5 11M15.5 9V11.5H13M15.5 14C15 16 11 17 9.5 15M8.5 17V14.5H11" fill="none" stroke="#fff" />
        </svg>
        <svg width="16" height="17" viewBox="0 0 16 17" className="ml-[12px]">
          <path d="M.8 1V6.5H6.5M1 6.5C5 2 11 1.5 14 5 16 8 13 13 7.5 16.5" fill="none" stroke="#fff" strokeWidth="1.2" />
        </svg>
        <Chev className="ml-[4px]" color="#fff" />
        <svg width="16" height="17" viewBox="0 0 16 17" className="ml-[9px] opacity-40">
          <path d="M15.2 1V6.5H9.5M15 6.5C11 2 5 1.5 2 5 0 8 3 13 8.5 16.5" fill="none" stroke="#fff" strokeWidth="1.2" />
        </svg>
        <Chev className="ml-[5px] opacity-40" color="#fff" />
        <svg width="7" height="8" viewBox="0 0 7 8" className="ml-[15px]">
          <path d="M0 .5H7M.5 4 3.5 7 6.5 4" fill="none" stroke="#fff" />
        </svg>
        <span className="ml-[27px] whitespace-nowrap text-[12px] tracking-[-0.9px]">フラッシュフィル_サンプル.xlsx</span>
        <svg width="10" height="6" viewBox="0 0 10 6" className="ml-[4px]"><path d="M.5 .5 5 5 9.5 .5" fill="none" stroke="#fff" strokeWidth="1.1" /></svg>
      </div>
      <div className="flex h-[31px] w-[366px] shrink-0 items-center rounded-[3px] border border-[#9fb8aa] bg-[#cfe3d8] pl-[11px] text-[12.5px] text-[#14532d]">
        <svg width="16" height="16" viewBox="0 0 16 16">
          <circle cx="9.5" cy="6" r="5" fill="none" stroke="#14532d" />
          <path d="M6 10 1 15" stroke="#14532d" />
        </svg>
        <span className="ml-[12px]">検索</span>
      </div>
      <div className="flex flex-1 items-center justify-end pr-[2px]">
        <div className="flex w-[48px] items-center justify-center">
          <svg width="25" height="25" viewBox="0 0 25 25">
            <circle cx="12.5" cy="12.5" r="12" fill="#6f9a28" />
            <path d="M5 6 10 9M18 5 14 10M4 13H20M12 10 8 18M12 10 18 17M7 21C10 18 15 18 18 21M10 3 14 6" stroke="#16240e" strokeWidth="2.2" fill="none" />
          </svg>
        </div>
        <div className="flex w-[46px] items-center justify-center"><Lightbulb size={19} strokeWidth={1.5} /></div>
        <div className="flex w-[48px] items-center justify-center"><Minus size={16} strokeWidth={1.3} /></div>
        <div className="flex w-[48px] items-center justify-center"><Square size={13} strokeWidth={1.6} /></div>
        <div className="flex w-[48px] items-center justify-center"><X size={18} strokeWidth={1.3} /></div>
      </div>
    </div>
  );
}

function MenuRow() {
  return (
    <div className="flex h-[31px] shrink-0 items-start text-[12.5px] text-[#333]">
      {menuTabs.map((t) => (
        <div key={t.label} className={`relative flex h-[28px] ${t.w} shrink-0 items-center justify-center whitespace-nowrap pt-[4px]`}>
          <span className={t.active ? 'mt-[4px] border-b-2 border-[#107c41] font-bold leading-[20px] text-[#222]' : t.cls}>{t.label}</span>
        </div>
      ))}
      <div className="ml-auto mt-[3px] flex items-center pr-[13px]">
        <div className="flex h-[24px] w-[64px] items-center justify-center rounded-[4px] border border-[#8a8a8a] bg-[#fafafa]">
          <svg width="12" height="12" viewBox="0 0 12 12"><path d="M.5 .5H11.5V8.5H5L2.5 11V8.5H.5Z" fill="none" stroke="#333" /></svg>
          <span className="ml-[3px] tracking-[-0.5px]">コメント</span>
        </div>
        <div className="ml-[9px] flex h-[24px] w-[63px] items-center justify-center rounded-[4px] bg-[#107c41] text-white">
          <svg width="13" height="13" viewBox="0 0 13 13"><path d="M.5 5.5V12.5H10.5V8M4 9C5 6 7 4.5 10 4.5M8 1.5 12 4.5 8 7.5" fill="none" stroke="#fff" /></svg>
          <span className="ml-[4px] text-[13px]">共有</span>
          <Chev className="ml-[4px]" color="#fff" />
        </div>
        <svg width="18" height="18" viewBox="0 0 18 18" className="ml-[15px]">
          <circle cx="7" cy="7.5" r="3.5" fill="none" stroke="#444" />
          <path d="M1 17C1 13 4 11.5 7 11.5S13 13 13 17" fill="none" stroke="#444" />
          <path d="M9 1H17V7.5H14L12.5 9.5V7.5" fill="none" stroke="#444" />
        </svg>
      </div>
    </div>
  );
}

export default function App() {
  return (
    <div className="flex h-[1080px] w-[1920px] flex-col overflow-hidden bg-[#f0f0f0] font-['Noto_Sans_CJK_JP','Noto_Sans',sans-serif] [font-feature-settings:'palt']">
      <TitleBar />
      <div className="flex min-h-0 flex-1 flex-col border-x-2 border-b-2 border-[#107c41]">
        <MenuRow />
        <Ribbon />
        <FormulaBar />
        <div className="mt-[8px] flex h-[797px] shrink-0">
          <div className="flex w-[1895px] shrink-0 flex-col bg-white">
            <GridHeader />
            <Grid />
          </div>
          <VScroll />
        </div>
        <SheetTabs />
        <StatusBar />
      </div>
    </div>
  );
}
